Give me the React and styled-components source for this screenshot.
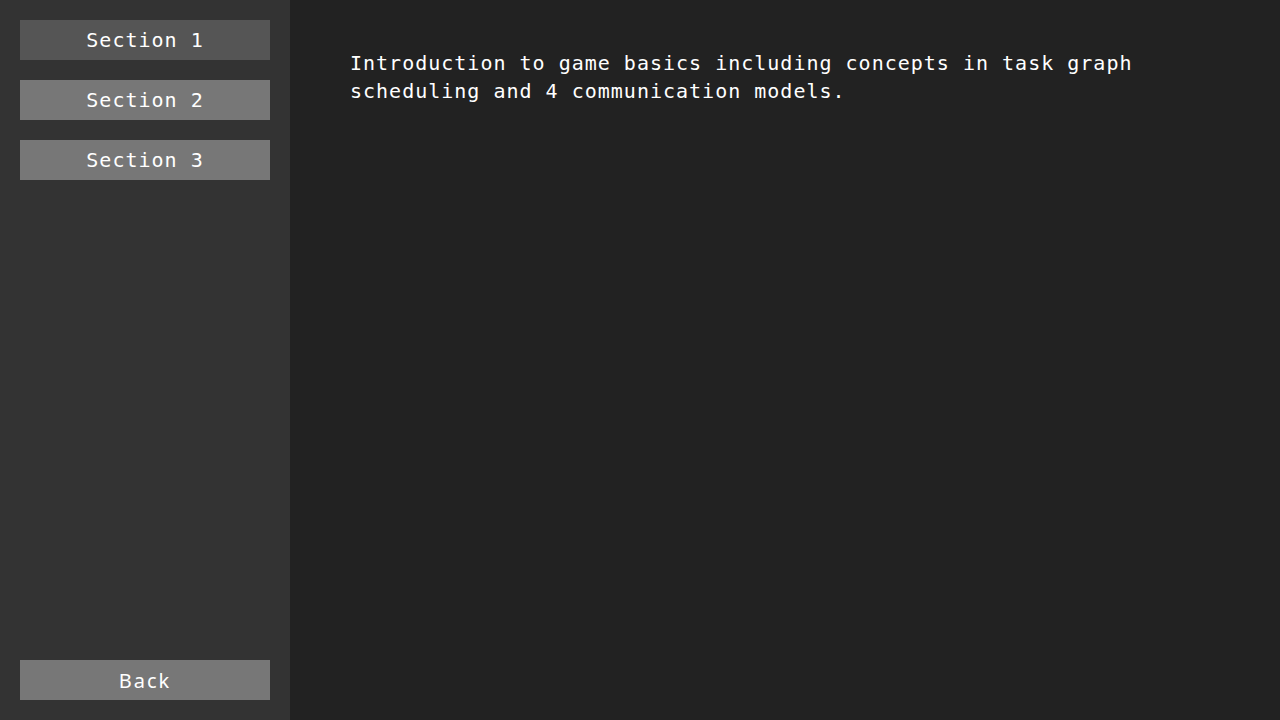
import React, { useState } from 'react';
import styled, { createGlobalStyle } from 'styled-components';

const GlobalStyles = createGlobalStyle`
  html, body {
    margin: 0;
    padding: 0;
    height: 100%;
  }

  #root {
    height: 100%;
  }
`;

const Layout = styled.div`
  display: flex;
  height: 100vh;
  background: #222222;
`;

const Sidebar = styled.aside`
  width: 290px;
  flex-shrink: 0;
  box-sizing: border-box;
  padding: 20px;
  background: #333333;
  display: flex;
  flex-direction: column;
  gap: 20px;
`;

const NavButton = styled.button`
  height: 40px;
  width: 100%;
  border: none;
  padding: 0;
  background: ${p => (p.$active ? '#555555' : '#777777')};
  color: #ffffff;
  font-family: ${p => (p.$sans ? '"Noto Sans", sans-serif' : '"DejaVu Sans Mono", monospace')};
  font-size: 20px;
  letter-spacing: ${p => (p.$sans ? '2px' : '1px')};
  cursor: pointer;
`;

const Spacer = styled.div`
  flex: 1;
`;

const Content = styled.main`
  flex: 1;
  padding: 49px 60px;
`;

const Text = styled.p`
  margin: 0;
  color: #ffffff;
  font-family: "DejaVu Sans Mono", monospace;
  font-size: 20px;
  line-height: 28px;
  letter-spacing: 1px;
`;

const sections = ['Section 1', 'Section 2', 'Section 3'];

export default function App() {
  const [active, setActive] = useState(0);

  return (
    <Layout>
      <GlobalStyles />
      <Sidebar>
        {sections.map((s, i) => (
          <NavButton key={s} $active={i === active} onClick={() => setActive(i)}>
            {s}
          </NavButton>
        ))}
        <Spacer />
        <NavButton $sans>Back</NavButton>
      </Sidebar>
      <Content>
        <Text>
          Introduction to game basics including concepts in task graph scheduling and 4 communication models.
        </Text>
      </Content>
    </Layout>
  );
}
